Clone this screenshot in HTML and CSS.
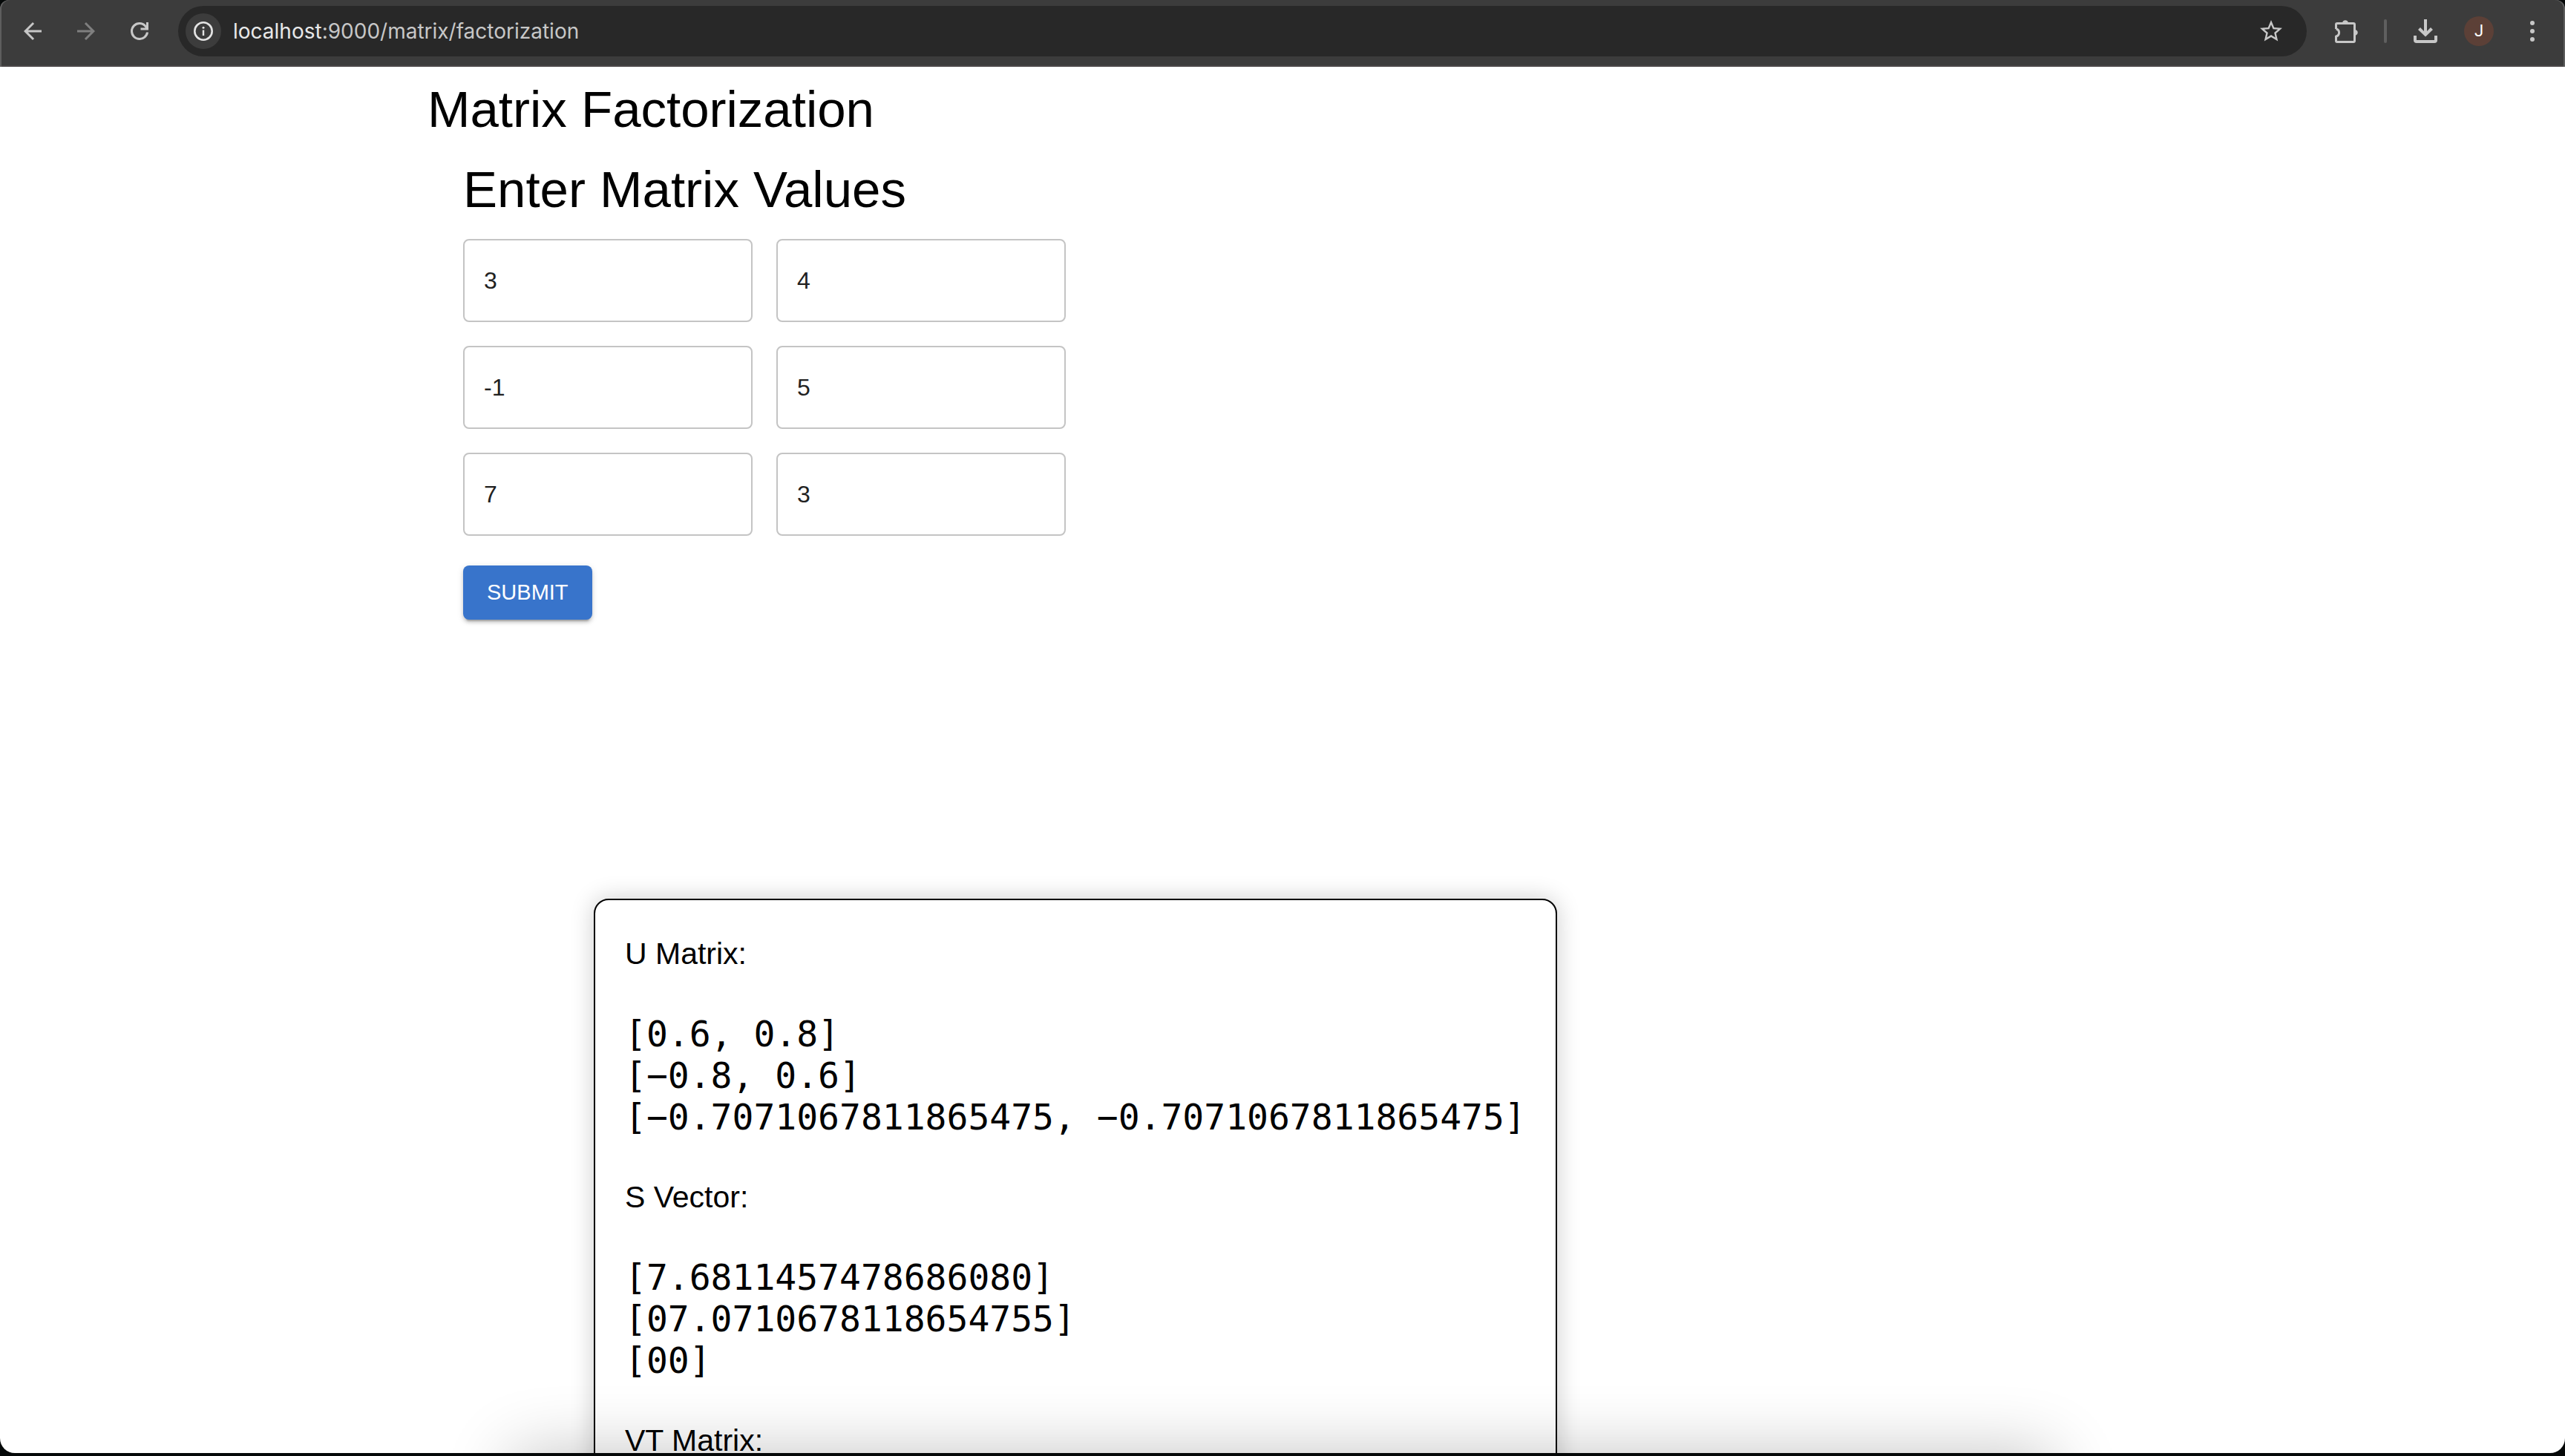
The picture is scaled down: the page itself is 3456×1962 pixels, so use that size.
FILE: index.html
```html
<!DOCTYPE html>
<html lang="en">
<head>
  <meta charset="utf-8">
  <meta name="viewport" content="width=device-width, initial-scale=1">
  <title>Matrix Factorization</title>
  <link rel="stylesheet" href="styles.css">
</head>
<body>
  <header class="toolbar">
    <nav class="toolbar-nav" aria-label="History">
      <button class="icon-button" type="button" aria-label="Back">
        <svg class="icon" viewBox="0 0 24 24"><path d="M20 11H7.8l5.6-5.6L12 4l-8 8 8 8 1.4-1.4L7.8 13H20z"/></svg>
      </button>
      <button class="icon-button icon-button-disabled" type="button" aria-label="Forward">
        <svg class="icon" viewBox="0 0 24 24"><path d="M4 11h12.2l-5.6-5.6L12 4l8 8-8 8-1.4-1.4 5.6-5.6H4z"/></svg>
      </button>
      <button class="icon-button" type="button" aria-label="Reload">
        <svg class="icon" viewBox="0 0 24 24"><path d="M12 20q-3.35 0-5.68-2.32T4 12t2.32-5.68T12 4q1.72 0 3.3.71T18 6.75V4h2v7h-7V9h4.2q-.8-1.4-2.19-2.2T12 6Q9.5 6 7.75 7.75T6 12t1.75 4.25T12 18q2.2 0 3.9-1.4T18 13h2q-.2 2.900-2.6 5T12 20"/></svg>
      </button>
    </nav>
    <div class="address-bar">
      <button class="site-info" type="button" aria-label="Site information">
        <svg class="site-info-icon" viewBox="0 0 28 28"><circle cx="14" cy="14" r="11.700" fill="none" stroke="currentColor" stroke-width="2.600"/><path d="M12.800 12.500h2.400V20h-2.400z"/><circle cx="14" cy="9.300" r="1.500"/></svg>
      </button>
      <span class="url"><span class="url-host">localhost</span>:9000/matrix/factorization</span>
      <button class="icon-button" type="button" aria-label="Bookmark">
        <svg class="icon" viewBox="0 0 24 24"><path d="M22 9.24l-7.19-.62L12 2 9.19 8.63 2 9.24l5.46 4.73L5.82 21 12 17.27 18.18 21l-1.63-7.03L22 9.24zM12 15.4l-3.76 2.27 1-4.28-3.32-2.88 4.38-.38L12 6.1l1.71 4.04 4.38.38-3.32 2.88 1 4.28L12 15.4z"/></svg>
      </button>
    </div>
    <div class="toolbar-actions">
      <button class="icon-button" type="button" aria-label="Extensions">
        <svg class="icon-small" viewBox="0 0 32 32"><path d="M10.2 4a4 4 0 0 1 7.6 0zM28 14.2a4 4 0 0 1 0 7.6z"/><path d="M1.5 13V7.5q0-2 2-2h21q2 0 2 2v21q0 2-2 2h-21q-2 0-2-2V23a5 5 0 0 0 0-10z" fill="none"/><path d="M1.500 13V7q0-1.500 1.500-1.500h22q1.500 0 1.500 1.500v22q0 1.500-1.500 1.500H3Q1.500 30.500 1.500 29v-6a5.100 5.100 0 0 0 0-10" fill="none" stroke="currentColor" stroke-width="3" stroke-linejoin="round"/></svg>
      </button>
      <span class="toolbar-divider"></span>
      <button class="icon-button" type="button" aria-label="Downloads">
        <svg class="icon-small" viewBox="0 0 32 32"><path d="M14 0h4v16l5-5 3 3-10 9.500L6 14l3-3 5 5z"/><path d="M2 22v6q0 2 2 2h24q2 0 2-2v-6" fill="none" stroke="currentColor" stroke-width="4"/></svg>
      </button>
      <button class="icon-button" type="button" aria-label="Profile"><span class="avatar">J</span></button>
      <button class="icon-button" type="button" aria-label="Menu">
        <svg class="icon-small" viewBox="0 0 32 32"><circle cx="16" cy="5" r="3"/><circle cx="16" cy="16" r="3"/><circle cx="16" cy="27" r="3"/></svg>
      </button>
    </div>
  </header>

  <div class="viewport">
    <main class="container">
      <h1 class="heading">Matrix Factorization</h1>
      <form class="matrix-form">
        <h2 class="heading">Enter Matrix Values</h2>
        <div class="matrix-grid">
          <input class="matrix-input" type="text" aria-label="Row 1, column 1" value="3">
          <input class="matrix-input" type="text" aria-label="Row 1, column 2" value="4">
          <input class="matrix-input" type="text" aria-label="Row 2, column 1" value="-1">
          <input class="matrix-input" type="text" aria-label="Row 2, column 2" value="5">
          <input class="matrix-input" type="text" aria-label="Row 3, column 1" value="7">
          <input class="matrix-input" type="text" aria-label="Row 3, column 2" value="3">
        </div>
        <button class="submit-button" type="button">SUBMIT</button>
      </form>
      <section class="result-card">
        <h3 class="result-label">U Matrix:</h3>
        <pre class="result-values">[0.6, 0.8]
[−0.8, 0.6]
[−0.7071067811865475, −0.7071067811865475]</pre>
        <h3 class="result-label">S Vector:</h3>
        <pre class="result-values">[7.6811457478686080]
[07.0710678118654755]
[00]</pre>
        <h3 class="result-label">VT Matrix:</h3>
      </section>
    </main>
    <div class="dock-shadow"></div>
  </div>
</body>
</html>
```
FILE: styles.css
```css
* {
  box-sizing: border-box;
}

body {
  display: flex;
  flex-direction: column;
  height: 100vh;
  margin: 0;
  padding-bottom: 4px;
  overflow: hidden;
  background: #050808;
  color: #000;
  font-family: "Liberation Sans", Arial, sans-serif;
}

button {
  border: 0;
  font-family: inherit;
  cursor: pointer;
}

/* Browser toolbar */

.toolbar {
  display: flex;
  flex: none;
  align-items: center;
  height: 90px;
  padding: 0 8px 6px;
  border-radius: 12px 12px 0 0;
  background: #3c3c3c;
  box-shadow: inset 2px 0 #5e5e5e, inset -2px 0 #5e5e5e, inset 0 -2px #4a4648;
  color: #c7c7c7;
}

.toolbar-nav,
.toolbar-actions {
  display: flex;
  align-items: center;
}

.icon-button {
  display: flex;
  align-items: center;
  justify-content: center;
  width: 72px;
  height: 68px;
  padding: 0;
  background: none;
  color: inherit;
}

.icon-button-disabled {
  color: #7f7f7f;
}

.icon {
  width: 36px;
  height: 36px;
  fill: currentColor;
}

.icon-small {
  width: 32px;
  height: 32px;
  fill: currentColor;
}

.address-bar {
  display: flex;
  flex: 1;
  align-items: center;
  height: 68px;
  margin: 0 18px 0 16px;
  padding: 0 12px 0 10px;
  border-radius: 34px;
  background: #282828;
}

.site-info {
  display: flex;
  align-items: center;
  justify-content: center;
  width: 48px;
  height: 48px;
  padding: 0;
  border-radius: 50%;
  background: #3c3c3c;
  color: #e3e3e3;
}

.site-info-icon {
  width: 28px;
  height: 28px;
  fill: currentColor;
}

.url {
  flex: 1;
  padding-left: 16px;
  font-family: Inter, sans-serif;
  font-size: 28px;
  line-height: 36px;
}

.url-host {
  color: #e8e8e8;
}

.toolbar-divider {
  width: 4px;
  height: 32px;
  margin: 0 16px 0 14px;
  border-radius: 2px;
  background: #5f5f5f;
}

.avatar {
  width: 40px;
  height: 40px;
  border-radius: 50%;
  background: #5c4037;
  color: #fff;
  font-family: Roboto, sans-serif;
  font-size: 22px;
  line-height: 40px;
  text-align: center;
}

/* Page */

.viewport {
  position: relative;
  flex: 1;
  min-height: 0;
  overflow: hidden;
  border-radius: 0 0 20px 20px;
  background: #fff;
}

.container {
  max-width: 2400px;
  margin: 0 auto;
  padding: 16px 48px 0;
}

.heading {
  margin: 0 0 24px;
  font-size: 69px;
  font-weight: 400;
  line-height: 84px;
}

.matrix-form {
  padding: 0 48px;
}

.matrix-grid {
  display: grid;
  grid-template-columns: repeat(2, 390px);
  gap: 32px;
}

.matrix-input {
  width: 100%;
  height: 112px;
  padding: 0 26px;
  border: 2px solid #c4c4c4;
  border-radius: 8px;
  background: #fff;
  color: #212121;
  font-family: inherit;
  font-size: 32px;
}

.submit-button {
  margin-top: 40px;
  padding: 12px 32px;
  border-radius: 8px;
  background: #3874cb;
  box-shadow: 0 6px 2px -4px rgba(0, 0, 0, 0.2), 0 4px 4px rgba(0, 0, 0, 0.14), 0 2px 10px rgba(0, 0, 0, 0.12);
  color: #fff;
  font-size: 29px;
  line-height: 49px;
}

.result-card {
  width: fit-content;
  margin: 376px 0 0 224px;
  padding: 40px;
  border: 2px solid #000;
  border-radius: 20px;
  background: #fff;
  box-shadow: 0 0 32px rgba(0, 0, 0, 0.2);
}

.result-label {
  margin: 0;
  font-size: 41px;
  font-weight: 400;
  line-height: 64px;
}

.result-values {
  margin: 48px 0;
  font-family: "DejaVu Sans Mono", Menlo, monospace;
  font-size: 48px;
  line-height: 56px;
}

/* Soft shade cast over the lower edge of the window */
.dock-shadow {
  position: absolute;
  top: 100%;
  left: 20%;
  right: 20%;
  height: 120px;
  box-shadow: 0 0 90px rgba(0, 0, 0, 0.24);
  pointer-events: none;
}
```
